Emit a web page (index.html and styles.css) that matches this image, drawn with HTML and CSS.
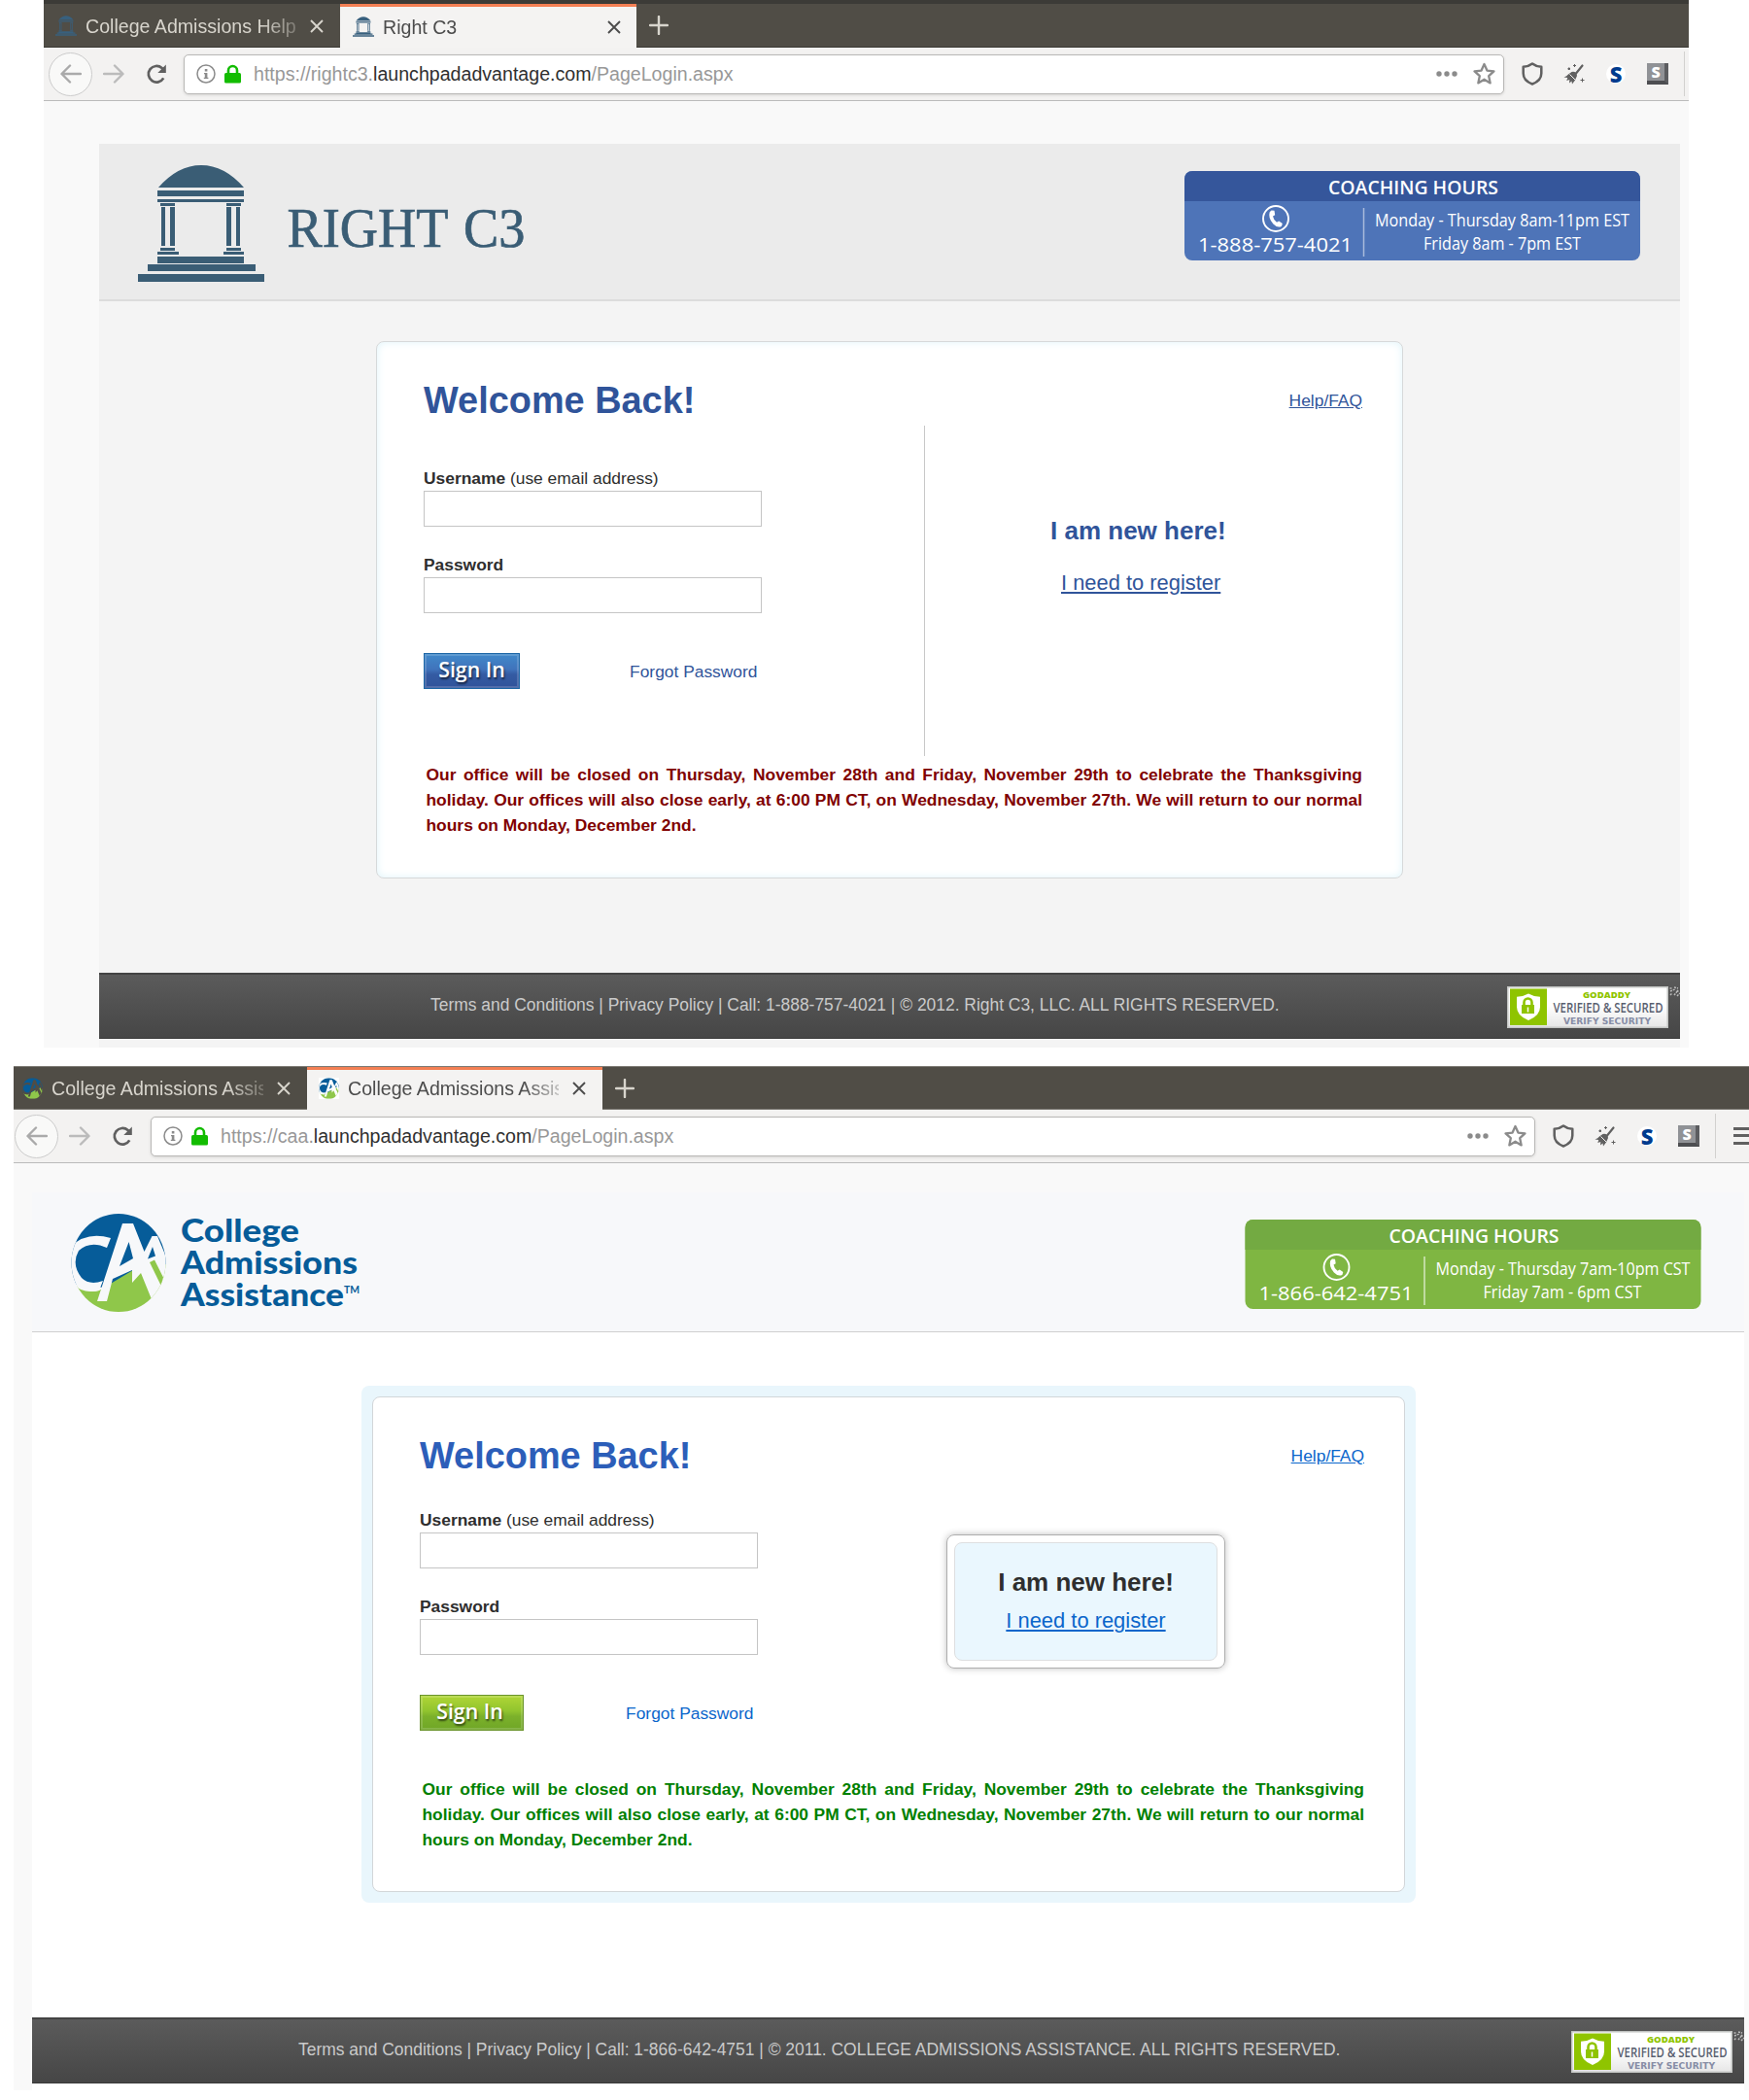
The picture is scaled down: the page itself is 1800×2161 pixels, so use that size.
FILE: index.html
```
<!DOCTYPE html>
<html lang="en">
<head>
<meta charset="utf-8">
<title>Launchpad login pages</title>
<link rel="stylesheet" href="styles.css">
</head>
<body>
<svg class="defs" width="0" height="0" aria-hidden="true">
  <symbol id="temple" viewBox="0 0 130 120">
    <path d="M21 23Q41 0 65 0T109 23ZM20 26h89v6H20zM20 35h89v3H20zM23 39h15v3H23zM91 39h15v3H91zM24 43h4v40h-4zM33 43h5v40h-5zM91 43h5v40h-5zM101 43h4v40h-4zM23 85h15v3H23zM91 85h15v3H91zM20 89h22v3H20zM88 89h21v3H88zM20 94h89v7H20zM10 102h111v7H10zM0 112h130v8H0z"/>
  </symbol>
  <symbol id="globe" viewBox="0 0 98 101">
    <clipPath id="disc"><ellipse cx="49" cy="50.5" rx="48.5" ry="50.5"/></clipPath>
    <g clip-path="url(#disc)">
      <path fill="#065c99" d="M0 0h98v52L62 62 34 76 0 72z"/>
      <path fill="#8fc74a" d="M0 69q14 14 29 10L64 58l34-6v49H0z"/>
      <g class="ink">
        <path d="M-3 37Q14 17 41 25L37 35Q20 27 8 38Q0 52 11 66Q19 74 33 69L29 79Q12 83 2 72L-6 66V40z"/>
        <path d="M53 10h11l11.500 29L83.500 23H89l10 24 2 14-7 19-11 8-11-27-9 10V58L43 67l-6 23H27z"/>
      </g>
      <path fill="#065c99" d="M59.600 29L64 46 50 54zM84 34l3 9.500-8 3z"/>
      <path fill="#8fc74a" d="M81 50l5-2.500 9 18-2 9z"/>
    </g>
  </symbol>
  <symbol id="x" viewBox="0 0 14 14"><path d="M1 1l12 12M13 1L1 13" fill="none" stroke="currentColor" stroke-width="1.9"/></symbol>
  <symbol id="plus" viewBox="0 0 20 20"><path d="M10 1v18M1 10h18" fill="none" stroke="currentColor" stroke-width="2.4" stroke-linecap="round"/></symbol>
  <symbol id="back" viewBox="0 0 22 20"><path d="M10 1.500L1.500 10l8.500 8.500M2 10h19" fill="none" stroke="currentColor" stroke-width="2.4" stroke-linecap="round" stroke-linejoin="round"/></symbol>
  <symbol id="reload" viewBox="0 0 22 22"><path d="M18.300 15.400A8.300 8.300 0 1 1 16.600 5L19 8" fill="none" stroke="currentColor" stroke-width="2.700"/><path d="M20.800 1.500v8.500h-8.500z" fill="currentColor"/></symbol>
  <symbol id="info" viewBox="0 0 20 20"><circle cx="10" cy="10" r="9" fill="none" stroke="currentColor" stroke-width="1.500"/><path d="M8.800 5h2.600v2.500H8.800zM8 9h3.400v4.800h1v1.200H7.800v-1.200h1v-3.600H8z" fill="currentColor"/></symbol>
  <symbol id="lock" viewBox="0 0 17 20"><path d="M4 10V6.500a4.500 4.500 0 0 1 9 0V10" fill="none" stroke="#12bc00" stroke-width="2.600"/><rect y="9" width="17" height="10.500" rx="1.500" fill="#12bc00"/></symbol>
  <symbol id="dots" viewBox="0 0 22 6"><g fill="currentColor"><circle cx="3" cy="3" r="2.700"/><circle cx="11" cy="3" r="2.700"/><circle cx="19" cy="3" r="2.700"/></g></symbol>
  <symbol id="star" viewBox="0 0 22 22"><path d="M11 1.500l2.800 6.200 6.700.8-5 4.600 1.400 6.900L11 16.500l-5.900 3.500 1.400-6.900-5-4.600 6.700-.8z" fill="none" stroke="currentColor" stroke-width="2.200" stroke-linejoin="round"/></symbol>
  <symbol id="shield" viewBox="0 0 22 24"><path d="M11 1.500C8.500 3.500 5 4.500 1.700 4.800v6.700c0 5 4 9 9.300 11 5.300-2 9.300-6 9.300-11V4.800C17 4.500 13.500 3.500 11 1.500z" fill="none" stroke="currentColor" stroke-width="2.500" stroke-linejoin="round"/></symbol>
  <symbol id="broom" viewBox="0 0 22 22"><path d="M19.500 2.500l-6.500 8" fill="none" stroke="currentColor" stroke-width="2.200" stroke-linecap="round"/><path d="M8.500 9q5-1 5.500 4l-2 4.500-3 4-.5-3-2.500 2 .3-3.500-3 1 1-3L.5 14.500q3-1 4.500-3z" fill="currentColor"/><path d="M6.500 11.500l5.500 5.500" stroke="#f3f2f1" stroke-width="1"/><path d="M11.500 1v3M10 2.500h3M19.500 15.500v4M17.500 17.500h4M5 5h1.500v1.500H5z" stroke="currentColor" stroke-width="1" fill="currentColor"/></symbol>
  <symbol id="phone" viewBox="0 0 30 30"><circle cx="15" cy="15" r="13" fill="none" stroke="currentColor" stroke-width="1.900"/><path d="M10.500 6.500l3 .2.700 4.500-2.200 1.300q.7 4 4 6.200l2.200-1.200 3.600 2.600-.8 2.600q-4 2.500-8.600-2.200-5.600-6.200-3.700-12.300z" fill="currentColor"/></symbol>
  <linearGradient id="sealbg" x2="0" y2="1"><stop offset=".45" stop-color="#fff"/><stop offset="1" stop-color="#e6e6e6"/></linearGradient>
  <symbol id="sealbox" viewBox="0 0 178 43">
    <rect x=".75" y=".75" width="164.500" height="41.500" fill="url(#sealbg)" stroke="#c3c5c3" stroke-width="1.500"/>
    <rect x="3" y="2.500" width="38" height="37.500" fill="#8fc400"/>
    <path d="M22 7.500q-5 3-12 3.300v10.500q0 9 12 13.700 12-4.700 12-13.700V10.800q-7-.3-12-3.300z" fill="#fff"/>
    <path d="M17.500 20v-3.500a4 4 0 0 1 8 0V20" fill="none" stroke="#8fc400" stroke-width="2.600"/><rect x="15" y="19" width="13" height="9" fill="#8fc400"/><path d="M21.500 21.500v5" stroke="#fff" stroke-width="1.500"/>
    <path d="M167.500 2h3M172 1l4 1M168 5l5-2M175 4l2 2M168 9l2-2M172 9l4-5M175 10l3-3" stroke="#bbb" stroke-width="1.500" stroke-dasharray="2 1"/>
  </symbol>
</svg>

<section class="window first">
  <div class="tabs">
    <div class="tab"><svg class="fav temple"><use href="#temple"/></svg><span class="title">College Admissions Help</span><svg class="close"><use href="#x"/></svg></div>
    <div class="tab active"><svg class="fav temple"><use href="#temple"/></svg><span class="title">Right C3</span><svg class="close"><use href="#x"/></svg></div>
    <svg class="add"><use href="#plus"/></svg>
  </div>
  <div class="toolbar">
    <span class="round"><svg class="arrow"><use href="#back"/></svg></span>
    <svg class="arrow forward"><use href="#back"/></svg>
    <svg class="reload"><use href="#reload"/></svg>
    <div class="url"><svg class="info"><use href="#info"/></svg><svg class="lock"><use href="#lock"/></svg><span class="address">https://rightc3.<b>launchpadadvantage.com</b>/PageLogin.aspx</span><svg class="dots"><use href="#dots"/></svg><svg class="star"><use href="#star"/></svg></div>
    <div class="tools"><svg class="shield"><use href="#shield"/></svg><svg class="broom"><use href="#broom"/></svg><span class="s-icon">S</span><span class="s-key">S</span><i class="sep"></i></div>
  </div>
  <main class="page blue">
    <header class="masthead">
      <svg class="brand" viewBox="0 0 400 120" width="400" height="120">
        <use href="#temple" width="130" height="120" fill="#3a5d75"/>
        <text x="153.500" y="84" textLength="245" lengthAdjust="spacingAndGlyphs" font-family="Liberation Serif, serif" font-size="56.500" fill="#3a5d75" stroke="#3a5d75" stroke-width=".7" word-spacing="3">RIGHT C3</text>
      </svg>
      <svg class="hours" viewBox="0 0 469 92" width="469" height="92">
        <rect width="469" height="92" rx="8" fill="#4e74b8"/><path d="M0 31V9q0-9 9-9h451q9 0 9 9v22z" fill="#35569b"/>
        <text x="148" y="23.500" textLength="175" lengthAdjust="spacingAndGlyphs" class="heavy">COACHING HOURS</text>
        <use href="#phone" x="79" y="34" width="30" height="30"/>
        <text x="14" y="83" textLength="159" lengthAdjust="spacingAndGlyphs" font-size="20.500">1-888-757-4021</text>
        <path d="M184.500 38v50" stroke="#a9bbdc" stroke-width="1.500"/>
        <text x="196" y="56.500" textLength="262" lengthAdjust="spacingAndGlyphs">Monday - Thursday 8am-11pm EST</text>
        <text x="246" y="81" textLength="162" lengthAdjust="spacingAndGlyphs">Friday 8am - 7pm EST</text>
      </svg>
    </header>
    <div class="stage">
      <section class="card">
        <div class="heading"><h1>Welcome Back!</h1><a class="help">Help/FAQ</a></div>
        <div class="columns">
          <form class="login">
            <label><b>Username</b> (use email address)</label><input type="text">
            <label><b>Password</b></label><input type="password">
            <div class="actions"><button type="button">Sign In</button><a>Forgot Password</a></div>
          </form>
          <div class="register"><h2>I am new here!</h2><a>I need to register</a></div>
        </div>
        <p class="notice">Our office will be closed on Thursday, November 28th and Friday, November 29th to celebrate the Thanksgiving holiday. Our offices will also close early, at 6:00 PM CT, on Wednesday, November 27th. We will return to our normal hours on Monday, December 2nd.</p>
      </section>
    </div>
    <footer><span>Terms and Conditions | Privacy Policy | Call: 1-888-757-4021 | © 2012. Right C3, LLC. ALL RIGHTS RESERVED.</span>
      <svg class="seal" viewBox="0 0 178 43"><use href="#sealbox" width="178" height="43"/>
        <text class="seal-name" x="78" y="12" textLength="49" lengthAdjust="spacingAndGlyphs">GODADDY</text>
        <text class="seal-claim" x="47.500" y="27" textLength="113" lengthAdjust="spacingAndGlyphs">VERIFIED &amp; SECURED</text>
        <text class="seal-verify" x="58" y="39" textLength="90" lengthAdjust="spacingAndGlyphs">VERIFY SECURITY</text>
      </svg></footer>
  </main>
</section>

<section class="window second">
  <div class="tabs">
    <div class="tab"><svg class="fav globe"><use href="#globe"/></svg><span class="title">College Admissions Assistance</span><svg class="close"><use href="#x"/></svg></div>
    <div class="tab active"><svg class="fav globe"><use href="#globe"/></svg><span class="title">College Admissions Assistance</span><svg class="close"><use href="#x"/></svg></div>
    <svg class="add"><use href="#plus"/></svg>
  </div>
  <div class="toolbar">
    <span class="round"><svg class="arrow"><use href="#back"/></svg></span>
    <svg class="arrow forward"><use href="#back"/></svg>
    <svg class="reload"><use href="#reload"/></svg>
    <div class="url"><svg class="info"><use href="#info"/></svg><svg class="lock"><use href="#lock"/></svg><span class="address">https://caa.<b>launchpadadvantage.com</b>/PageLogin.aspx</span><svg class="dots"><use href="#dots"/></svg><svg class="star"><use href="#star"/></svg></div>
    <div class="tools"><svg class="shield"><use href="#shield"/></svg><svg class="broom"><use href="#broom"/></svg><span class="s-icon">S</span><span class="s-key">S</span><i class="sep"></i><i class="menu"></i></div>
  </div>
  <main class="page green">
    <header class="masthead">
      <svg class="brand" viewBox="0 0 300 101" width="300" height="101">
        <use href="#globe" width="98" height="101"/>
        <g font-family="Lato, sans-serif" font-weight="900" font-size="32" fill="#065c99">
          <text x="113" y="29" textLength="122" lengthAdjust="spacingAndGlyphs">College</text>
          <text x="113" y="62" textLength="182" lengthAdjust="spacingAndGlyphs">Admissions</text>
          <text x="113" y="95" textLength="168" lengthAdjust="spacingAndGlyphs">Assistance</text>
          <text x="281" y="82" textLength="16" lengthAdjust="spacingAndGlyphs" font-size="12" font-weight="700">TM</text>
        </g>
      </svg>
      <svg class="hours" viewBox="0 0 469 92" width="470" height="92">
        <rect width="469" height="92" rx="8" fill="#7fb642"/><path d="M0 31V9q0-9 9-9h451q9 0 9 9v22z" fill="#73aa42"/>
        <text x="148" y="23.500" textLength="175" lengthAdjust="spacingAndGlyphs" class="heavy">COACHING HOURS</text>
        <use href="#phone" x="79" y="34" width="30" height="30"/>
        <text x="14" y="83" textLength="159" lengthAdjust="spacingAndGlyphs" font-size="20.500">1-866-642-4751</text>
        <path d="M184.500 38v50" stroke="#d4e7bf" stroke-width="1.500"/>
        <text x="196" y="56.500" textLength="262" lengthAdjust="spacingAndGlyphs">Monday - Thursday 7am-10pm CST</text>
        <text x="245" y="81" textLength="163" lengthAdjust="spacingAndGlyphs">Friday 7am - 6pm CST</text>
      </svg>
    </header>
    <div class="stage">
      <div class="frame">
      <section class="card">
        <div class="heading"><h1>Welcome Back!</h1><a class="help">Help/FAQ</a></div>
        <div class="columns">
          <form class="login">
            <label><b>Username</b> (use email address)</label><input type="text">
            <label><b>Password</b></label><input type="password">
            <div class="actions"><button type="button">Sign In</button><a>Forgot Password</a></div>
          </form>
          <div class="register"><div class="inner"><h2>I am new here!</h2><a>I need to register</a></div></div>
        </div>
        <p class="notice">Our office will be closed on Thursday, November 28th and Friday, November 29th to celebrate the Thanksgiving holiday. Our offices will also close early, at 6:00 PM CT, on Wednesday, November 27th. We will return to our normal hours on Monday, December 2nd.</p>
      </section>
      </div>
    </div>
    <footer><span>Terms and Conditions | Privacy Policy | Call: 1-866-642-4751 | © 2011. COLLEGE ADMISSIONS ASSISTANCE. ALL RIGHTS RESERVED.</span>
      <svg class="seal" viewBox="0 0 178 43"><use href="#sealbox" width="178" height="43"/>
        <text class="seal-name" x="78" y="12" textLength="49" lengthAdjust="spacingAndGlyphs">GODADDY</text>
        <text class="seal-claim" x="47.500" y="27" textLength="113" lengthAdjust="spacingAndGlyphs">VERIFIED &amp; SECURED</text>
        <text class="seal-verify" x="58" y="39" textLength="90" lengthAdjust="spacingAndGlyphs">VERIFY SECURITY</text>
      </svg></footer>
  </main>
</section>
</body>
</html>
```

FILE: styles.css
```
* { box-sizing: border-box; }
body {
  margin: 0;
  height: 2161px;
  overflow: hidden;
  background: #fff;
  color: #2e2e2e;
  font: 17.4px/26px "Liberation Sans", Arial, sans-serif;
}
svg { flex: none; display: block; }
.defs { position: absolute; }
h1, h2, p { margin: 0; }

/* Browser windows */
.window { display: flex; flex-direction: column; background: #f9f9f9; }
.first { margin-left: 45px; width: 1693px; height: 1078px; }
.second { margin: 19px 0 0 14px; height: 1054px; overflow: hidden; }

.tabs { display: flex; flex: none; background: #504d46; color: #d8d5cd; }
.first .tabs { height: 49px; border-top: 4px solid #3c3b37; border-bottom: 1px solid #3b3934; }
.second .tabs { height: 45px; border-top: 1px solid #7c7973; border-bottom: 1px solid #7c7973; }
.tab { display: flex; align-items: center; width: 304px; padding: 1px 17px 0 12px; font-size: 19.6px; }
.first .tab { height: 44px; width: 305px; }
.first .tab.active {
  height: 45px;
  padding: 0 16px 1px 13px;
}
.tab.active {
  background: #f4f3f2;
  color: #4c4c4c;
  border-top: 3px solid #f37f54;
}
.second .tab { width: 302px; padding: 0 17px 0 9px; }
.second .tab.active { width: 304px; padding: 0 17px 3px 12px; height: 44px; }
.fav { width: 22px; height: 21px; margin-right: 9px; }
.fav.temple { fill: #38607e; }
.fav.globe { height: 22px; width: 21px; --ink: #504d46; }
.active .fav.globe { background: #fff; --ink: #fff; }
.title {
  flex: 1;
  white-space: nowrap;
  overflow: hidden;
  margin-right: 13px;
  -webkit-mask-image: linear-gradient(90deg, #000 83%, rgba(0,0,0,.3) 100%);
  mask-image: linear-gradient(90deg, #000 83%, rgba(0,0,0,.3) 100%);
}
.second .title { margin-right: 14px; }
.close { width: 14px; height: 14px; }
.add { width: 20px; height: 20px; margin: 12px 0 0 13px; }

.toolbar {
  display: flex;
  align-items: center;
  flex: none;
  height: 55px;
  padding-left: 5px;
  background: #f3f2f1;
  border-bottom: 1px solid #bbb;
  color: #606060;
}
.second .toolbar { padding-left: 1px; }
.round {
  display: flex;
  align-items: center;
  justify-content: center;
  flex: none;
  width: 45px;
  height: 45px;
  border: 1px solid #ccc;
  border-radius: 50%;
  background: #f9f9f8;
  color: #aaa;
}
.arrow { width: 22px; height: 20px; }
.arrow.forward { transform: scaleX(-1); margin: 0 22px 0 11px; color: #bbb; }
.reload { width: 22px; height: 22px; margin-right: 17px; }
.second .reload { margin-right: 18px; }
.url {
  display: flex;
  align-items: center;
  flex: none;
  width: 1359px;
  height: 41px;
  padding: 0 8px 0 12px;
  background: #fff;
  border: 1px solid #b9b8b6;
  border-radius: 5px;
  box-shadow: 0 1px 3px rgba(0,0,0,.12);
  color: #8b8b8b;
}
.second .url { width: 1425px; }
.info { width: 20px; height: 20px; margin-right: 9px; }
.lock { width: 17px; height: 20px; margin-right: 13px; }
.address { flex: 1; font-size: 19.6px; color: #989898; white-space: nowrap; }
.address b { font-weight: 400; color: #303030; }
.dots { width: 22px; height: 6px; margin-right: 16px; }
.star { width: 23px; height: 24px; }
.tools { display: flex; align-items: center; flex: none; margin-left: 18px; }
.shield { width: 22px; height: 24px; margin-right: 21px; }
.broom { width: 22px; height: 22px; margin-right: 22px; }
.s-icon {
  width: 20px;
  height: 20px;
  border-radius: 50%;
  background: #fff;
  color: #003b8e;
  font: 800 22px/20px "Open Sans", sans-serif;
  text-align: center;
  margin-right: 22px;
}
.s-key {
  width: 22px;
  height: 22px;
  border-right: 4px solid #5c5d60;
  border-bottom: 4px solid #4d4e51;
  background: #909296;
  color: #fff;
  font: 800 16px/18px "Open Sans", sans-serif;
  text-align: center;
}
.sep { width: 1px; height: 46px; margin-left: 16px; background: #d2d1cf; }
.menu {
  width: 22px;
  height: 18px;
  margin-left: 18px;
  background: linear-gradient(#606060 0 3px, transparent 3px 7.5px, #606060 7.5px 10.5px, transparent 10.5px 15px, #606060 15px);
}

/* Web pages */
.page { display: flex; flex-direction: column; flex: 1; }
.first .page { margin: 44px 9px 0 57px; padding-bottom: 9px; background: #f4f4f4; }
.second .page { margin: 30px 5px 0 19px; padding-bottom: 7px; background: #fff; }
.masthead { display: flex; justify-content: space-between; flex: none; }
.blue .masthead { height: 162px; padding: 22px 41px 0 40px; background: #ebebeb; border-bottom: 2px solid #dcdcdc; }
.green .masthead { height: 144px; padding: 22px 44px 0 40px; background: #f7f8fa; border-bottom: 1px solid #cfcfcf; }
.hours { margin-top: 6px; color: #fff; fill: #fff; font: 18.5px "Open Sans", sans-serif; }
.hours .heavy { font-size: 20.5px; font-weight: 600; }
.ink { fill: var(--ink, #f7f8fa); }

.stage { flex: 1; }
.blue .stage { padding: 41px 0 0 285px; }
.green .stage { padding: 55px 0 0 339px; }
.card { background: #fff; border: 1px solid #d6d9da; border-radius: 8px; }
.blue .card { width: 1057px; height: 553px; padding: 38px 41px 0 48px; box-shadow: inset 0 0 8px #dff4fa; }
.frame { width: 1085px; height: 532px; padding: 11px; background: #e9f6fc; border-radius: 8px; }
.green .card { width: 1063px; height: 510px; padding: 38px 41px 0 48px; border-color: #d2d6d9; }
.heading { display: flex; justify-content: space-between; height: 48px; }
.green .heading { height: 47px; }
h1 { font-size: 37.9px; line-height: 44px; color: #30549a; }
.green h1 { color: #2c5eb9; }
a { color: #30549a; }
.green a { color: #0b66cb; }
.help { margin-top: 9px; text-decoration: underline; }
.columns { display: flex; height: 340px; }
.green .columns { height: 299px; }
.login { flex: none; width: 516px; padding-top: 41px; }
.blue .login { border-right: 1px solid #c8c8c8; }
.green .login { width: 542px; padding-top: 28px; }
.login label { display: block; }
.login input { display: block; width: 348px; height: 37px; margin: 0 0 26px; border: 1px solid #c5c5c5; background: #fff; }
.actions { display: flex; width: 343.5px; justify-content: space-between; align-items: flex-start; margin-top: 41px; }
.actions a { margin-top: 6px; }
button {
  width: 99px;
  height: 37px;
  padding: 0 0 3px;
  border: 1px solid #1c66a6;
  background: linear-gradient(#4189ca, #4073bb 45%, #345ba3 60%, #30539a);
  box-shadow: inset 0 0 0 2px rgba(255,255,255,.16);
  color: #fff;
  font: 600 21.3px/30px "Open Sans", sans-serif;
  text-shadow: 1px 2px 2px rgba(0,0,0,.6);
}
.green button { width: 107px; padding-right: 4px; border-color: #6a942b; background: linear-gradient(#b0d636, #91c42e 45%, #7cb12b 60%, #6fa626); }
.blue .register { padding: 93px 0 0 129px; }
h2 { font-size: 26px; line-height: 30px; white-space: nowrap; }
.blue h2 { color: #30549a; margin-bottom: 26px; }
.register a { font-size: 21.9px; text-decoration: underline; white-space: nowrap; }
.blue .register a { margin-left: 11px; }
.green .register {
  width: 287px;
  height: 138px;
  margin-top: 56px;
  padding: 7px;
  border: 1px solid #adadad;
  border-radius: 8px;
  box-shadow: 0 0 7px rgba(0,0,0,.25);
}
.inner { height: 122px; padding: 25px 0 0; background: #eaf7fe; border: 1px solid #dedfe0; border-radius: 8px; text-align: center; }
.green h2 { margin-bottom: 12px; }
.notice { margin: 6px 0 0 2.5px; font-weight: 700; color: #800000; text-align: justify; }
.green .notice { color: #008000; }

footer {
  display: flex;
  flex: none;
  height: 68px;
  border-top: 2px solid #434343;
  border-bottom: 1px solid #393939;
  background: linear-gradient(#5b5b5b, #464646);
  color: #cacaca;
  white-space: nowrap;
}
footer span { flex: 1; }
.blue footer span { margin: 18px 0 0 341px; font-size: 17.43px; }
.green footer span { margin: 18px 0 0 274px; font-size: 17.46px; }
.seal { width: 178px; height: 43px; margin-top: 12px; }
.seal-name { font: 800 9.5px "Open Sans", sans-serif; fill: #8fc400; }
.seal-claim { font: 600 15px "Open Sans", sans-serif; fill: #596070; }
.seal-verify { font: 700 9px "DejaVu Sans", sans-serif; fill: #868ca5; }
```
